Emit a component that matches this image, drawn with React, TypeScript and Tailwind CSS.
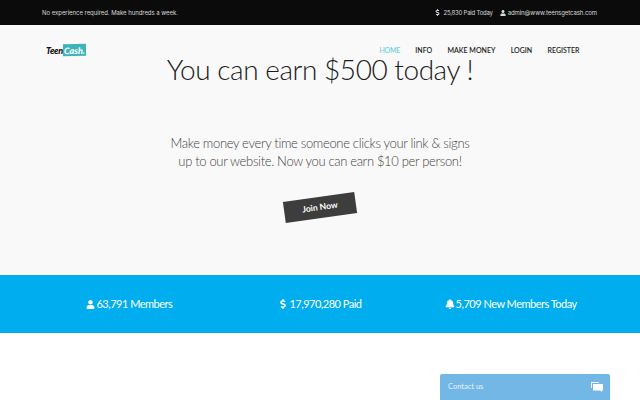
import type { ReactNode } from 'react';
import { FaBell, FaDollarSign, FaUser } from 'react-icons/fa';

const NAV = ['HOME', 'INFO', 'MAKE MONEY', 'LOGIN', 'REGISTER'];

function Stat({ icon, label }: { icon: ReactNode; label: string }) {
  return (
    <div className="flex flex-1 items-center justify-center gap-[1px] text-[11px] tracking-[-0.5px] text-white">
      {icon}
      <span>{label}</span>
    </div>
  );
}

export default function App() {
  return (
    <div className="relative h-[400px] w-[640px] overflow-hidden bg-white font-['Lato',sans-serif]">
      <div className="flex h-[25px] items-center justify-between bg-[#0b0b0c] pr-[43px] pl-[42px] font-['Inter',sans-serif] text-[6px] tracking-[-0.04px] text-[#d8d8d8]">
        <span>No experience required. Make hundreds a week.</span>
        <div className="flex items-center gap-[7px]">
          <span className="flex items-center gap-[2px] tracking-[-0.22px]">
            <FaDollarSign className="text-[7px]" />
            25,830 Paid Today
          </span>
          <span className="flex items-center gap-[2px] tracking-[-0.08px]">
            <FaUser className="text-[6px]" />
            admin@www.teensgetcash.com
          </span>
        </div>
      </div>

      <section className="h-[250px] bg-[#f9f9f9]">
        <div className="flex h-[25px] items-center justify-between pt-[25px] pr-[60.5px] pl-[46px]">
          <div className="flex items-center text-[9px] leading-none font-black italic">
            <span className="tracking-[-0.2px] text-[#111]">Teen</span>
            <span className="-rotate-1 bg-[#3cb4b8] px-[1px] py-[1.5px] text-white">Cash.</span>
          </div>
          <nav className="flex gap-[15.3px] text-[7px] leading-none font-semibold text-[#222]">
            {NAV.map((item) => (
              <a key={item} className={item === 'HOME' ? 'tracking-[-0.3px] text-[#6fd3d8]' : ''}>
                {item}
              </a>
            ))}
          </nav>
        </div>
        <h1 className="mt-[5px] text-center text-[28px] leading-[28px] font-light tracking-[-0.45px] text-[#1c1c1c]">
          You can earn $500 today !
        </h1>
        <p className="mx-auto mt-[51px] w-[305px] text-center text-[13px] leading-[18px] font-light tracking-[-0.33px] text-[#444]">
          Make money every time someone clicks your link &amp; signs up to our website. Now you can earn $10 per person!
        </p>
        <div className="mt-[27px] flex justify-center">
          <button
            type="button"
            className="h-[21px] w-[72px] -rotate-[8deg] bg-[#3d3d3d] text-[8.5px] font-bold text-white"
          >
            Join Now
          </button>
        </div>
      </section>

      <section className="flex h-[58px] items-center bg-[#00aeef] px-[34px]">
        <Stat icon={<FaUser className="text-[9px]" />} label="63,791 Members" />
        <Stat icon={<FaDollarSign className="text-[10px]" />} label="17,970,280 Paid" />
        <Stat icon={<FaBell className="text-[10px]" />} label="5,709 New Members Today" />
      </section>

      <div className="absolute right-[30px] bottom-0 flex h-[26px] w-[170px] items-center justify-between rounded-t-[2px] bg-[#72b7e6] pr-[7px] pl-2 text-[7.5px] text-[#e6f3fb]">
        <span>Contact us</span>
        <svg width="12" height="10" viewBox="0 0 12 10" fill="white">
          <path d="M0 0h8v1H1v5H0z" />
          <path d="M2 2h10v6.5h-1V10L9.2 8.5H2z" />
        </svg>
      </div>
    </div>
  );
}
